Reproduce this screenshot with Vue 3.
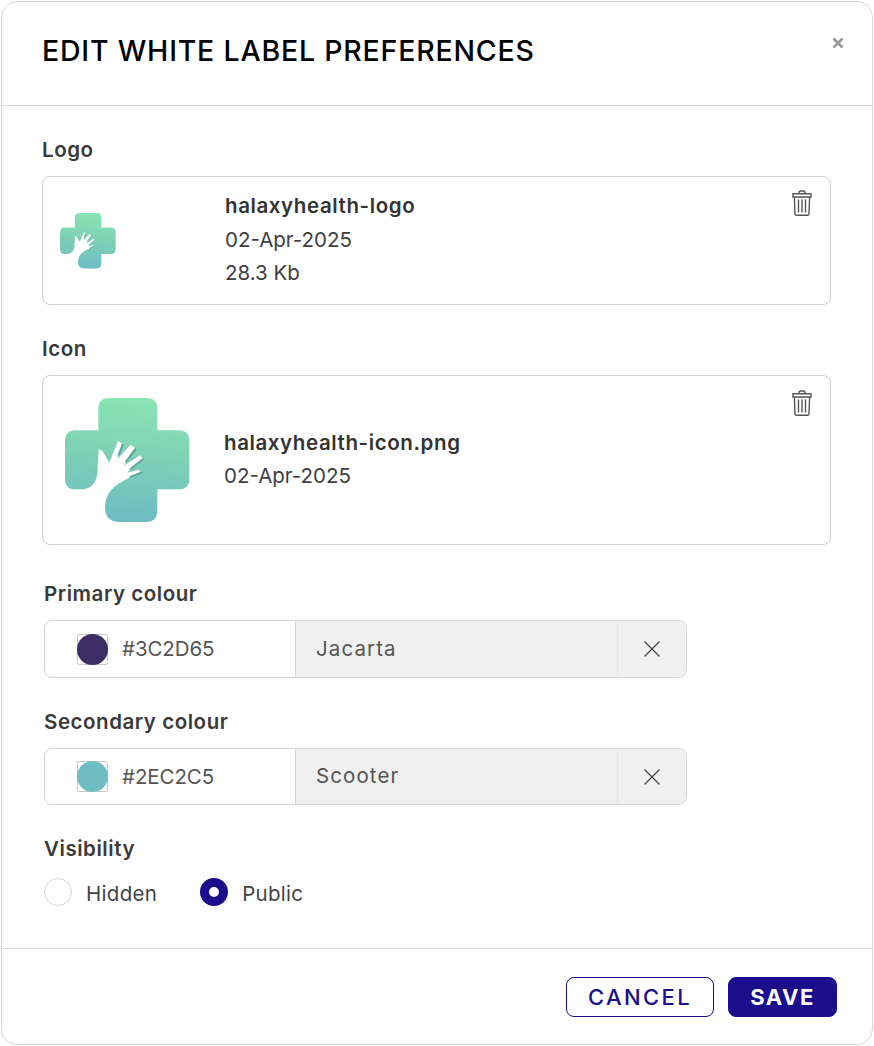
<script setup>
const colours = [
  { label: 'Primary colour', hex: '#3C2D65', name: 'Jacarta', fill: '#3c2d65' },
  { label: 'Secondary colour', hex: '#2EC2C5', name: 'Scooter', fill: '#6fbcc3' },
]
</script>

<template>
  <div class="modal">
    <svg width="0" height="0" class="defs">
      <defs>
        <linearGradient id="g" x1="0.55" y1="0" x2="0.45" y2="1">
          <stop offset="0" stop-color="#8ae4b4" />
          <stop offset="0.5" stop-color="#7dd0b6" />
          <stop offset="1" stop-color="#6cbcc4" />
        </linearGradient>
        <symbol id="brand" viewBox="75 68 375 375">
          <path fill="url(#g)" d="M175 100Q175 68 207 68H320Q352 68 352 100V165H415Q448 165 448 198V310Q448 342 415 342H352V405Q352 440 318 440H240Q195 440 195 395Q195 350 240 322Q270 305 302 290L296 283L260 292L308 250L300 240L250 272L285 218L272 208L232 252L246 204L234 197L208 262L188 228L176 222L172 295Q165 342 120 342H108Q75 342 75 310V198Q75 165 108 165H175Z" />
          <path fill="none" stroke="#3f8f8a" stroke-width="6" stroke-linecap="round" d="M248 208L236 238M286 222L258 258M308 252L272 280M304 292L272 304" opacity=".7" />
        </symbol>
        <symbol id="trash" viewBox="0 0 20 26">
          <path fill="none" stroke="#555" stroke-width="1.4" d="M7 3.6V2.6Q7 1 8.6 1H11.4Q13 1 13 2.6V3.6M1 3.7H19V7H1ZM2.4 7L3 24Q3 25.3 4.4 25.3H15.6Q17 25.3 17 24L17.6 7M6.5 9.5V22.5M10 9.5V22.5M13.5 9.5V22.5" />
        </symbol>
      </defs>
    </svg>

    <header class="head">
      <h1>EDIT WHITE LABEL PREFERENCES</h1>
      <button class="close" aria-label="Close">
        <svg width="12" height="12" viewBox="0 0 12 12"><path d="M1.5 1.5L10.5 10.5M10.5 1.5L1.5 10.5" stroke="#999" stroke-width="2.6" /></svg>
      </button>
    </header>

    <main class="body">
      <section class="upload-sec">
        <h2>Logo</h2>
        <div class="card card-logo">
          <svg class="logo-img"><use href="#brand" /></svg>
          <div class="meta">
            <strong>halaxyhealth-logo</strong>
            <span>02-Apr-2025</span>
            <span>28.3 Kb</span>
          </div>
          <svg class="trash"><use href="#trash" /></svg>
        </div>
      </section>

      <section class="upload-sec icon-sec">
        <h2>Icon</h2>
        <div class="card card-icon">
          <svg class="icon-img"><use href="#brand" /></svg>
          <div class="meta">
            <strong>halaxyhealth-icon.png</strong>
            <span>02-Apr-2025</span>
          </div>
          <svg class="trash"><use href="#trash" /></svg>
        </div>
      </section>

      <section v-for="c in colours" :key="c.hex" class="colour-sec">
        <h2>{{ c.label }}</h2>
        <div class="field">
          <div class="hex">
            <span class="swatch"><i :style="{ background: c.fill }"></i></span>
            <span>{{ c.hex }}</span>
          </div>
          <div class="name">{{ c.name }}</div>
          <div class="clear">
            <svg width="18" height="18" viewBox="0 0 18 18"><path d="M1.5 1.5L16.5 16.5M16.5 1.5L1.5 16.5" stroke="#444" stroke-width="1.2" /></svg>
          </div>
        </div>
      </section>

      <section class="vis-sec">
        <h2>Visibility</h2>
        <div class="radios">
          <label class="radio"><span class="dot"></span><span class="rt">Hidden</span></label>
          <label class="radio"><span class="dot on"></span><span class="rt">Public</span></label>
        </div>
      </section>
    </main>

    <footer class="foot">
      <button class="btn cancel">CANCEL</button>
      <button class="btn save">SAVE</button>
    </footer>
  </div>
</template>

<style>
html, body { margin: 0; background: #fff; }
</style>

<style scoped>
* { box-sizing: border-box; }
.defs { position: absolute; }
.modal {
  margin: 1px;
  width: 872px;
  height: 1044px;
  border: 1px solid #d3d6dc;
  border-radius: 16px;
  background: #fff;
  font-family: Inter, "Noto Sans", sans-serif;
  color: #3a3a3a;
  display: flex;
  flex-direction: column;
  overflow: hidden;
}
.head {
  height: 104px;
  flex: none;
  border-bottom: 1px solid #d8d8d8;
  padding: 31px 28px 0 40px;
  display: flex;
  justify-content: space-between;
  align-items: flex-start;
}
h1 {
  margin: 0;
  font-size: 28.5px;
  line-height: 36px;
  font-weight: 500;
  letter-spacing: 0.8px;
  color: #000;
}
.close { border: 0; background: none; padding: 0; margin-top: 4px; line-height: 0; }
.body { flex: 1; padding: 31px 41px 0 40px; }
h2 {
  margin: 0;
  font-size: 20.5px;
  line-height: 26px;
  font-weight: 600;
  letter-spacing: 0.55px;
  color: #3a3a3a;
}
.card {
  position: relative;
  margin-top: 13px;
  border: 1px solid #ccd0d6;
  border-radius: 8px;
  display: flex;
  align-items: center;
}
.card-logo { height: 129px; padding-left: 17px; }
.card-icon { height: 170px; padding-left: 22px; }
.icon-sec { margin-top: 31px; }
.logo-img { width: 56px; height: 56px; flex: none; filter: blur(.4px); margin-right: 109px; }
.icon-img { width: 125px; height: 125px; flex: none; filter: blur(.4px); margin-right: 34px; }
.meta {
  display: flex;
  flex-direction: column;
  margin-top: -2px;
  font-size: 20.5px;
  line-height: 33.5px;
  color: #3f3f3f;
}
.meta strong { font-weight: 600; color: #333; letter-spacing: 0.6px; }
.trash { position: absolute; right: 18px; top: 14px; width: 20px; height: 26px; }
.card-logo .trash { top: 13px; }
.colour-sec { margin-left: 2px; margin-top: 36px; }
.colour-sec + .colour-sec { margin-top: 31px; }
.colour-sec + .colour-sec .field { height: 57px; }
.field {
  margin-top: 13px;
  width: 643px;
  height: 58px;
  border: 1px solid #d3d6dc;
  border-radius: 8px;
  display: flex;
  overflow: hidden;
  font-size: 20.5px;
}
.hex {
  width: 251px;
  display: flex;
  align-items: center;
  gap: 14px;
  padding-left: 32px;
  color: #555;
  letter-spacing: -0.1px;
  border-right: 1px solid #d3d6dc;
}
.hex > span:last-child { margin-top: -1px; }
.swatch {
  width: 31px;
  height: 31px;
  border: 1px solid #c9c9c9;
  border-radius: 2px;
  display: block;
  position: relative;
}
.swatch i {
  position: absolute;
  inset: -1px;
  border-radius: 50%;
}
.name {
  flex: 1;
  background: #f0f0f0;
  display: flex;
  align-items: center;
  padding: 0 0 2px 20px;
  color: #555;
  letter-spacing: 1.1px;
}
.clear {
  width: 69px;
  background: #f0f0f0;
  border-left: 1px solid #e6e6e6;
  display: flex;
  align-items: center;
  justify-content: center;
}
.vis-sec { margin-left: 2px; margin-top: 31px; }
.radios { margin-top: 16px; display: flex; gap: 43px; }
.radio {
  display: flex;
  align-items: flex-start;
  gap: 14px;
  font-size: 20.5px;
  letter-spacing: 0.3px;
  color: #444;
}
.rt { line-height: 32px; }
.dot {
  width: 28px;
  height: 28px;
  border-radius: 50%;
  border: 1px solid #d3d6dc;
  background: #fff;
}
.dot.on { border: 9px solid #1a0e8c; }
.foot {
  height: 96px;
  flex: none;
  border-top: 1px solid #d8d8d8;
  padding: 28px 35px 0 0;
  display: flex;
  justify-content: flex-end;
  gap: 14px;
  align-items: flex-start;
}
.btn {
  height: 40px;
  border-radius: 8px;
  font-family: inherit;
  font-size: 22px;
  padding: 0;
}
.cancel {
  width: 148px;
  background: #fff;
  border: 1px solid #1a0e8c;
  color: #1a0e8c;
  font-weight: 500;
  letter-spacing: 2.4px;
}
.save {
  width: 109px;
  background: #1a0e8c;
  border: 1px solid #1a0e8c;
  color: #fff;
  font-weight: 700;
  letter-spacing: 1.5px;
}
</style>
